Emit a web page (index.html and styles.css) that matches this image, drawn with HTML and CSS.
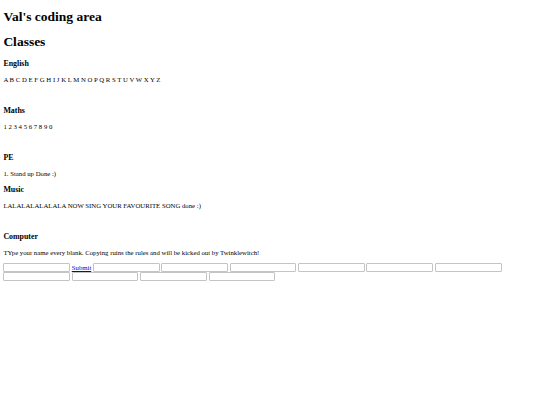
FILE: index.html
```html
<!DOCTYPE html>
<html>
<head>
<meta charset="utf-8">
<title>Val's coding area</title>
<link rel="stylesheet" href="styles.css">
</head>
<body class="page">
<h1 class="title title-first">Val's coding area</h1>
<h1 class="title">Classes</h1>
<h3 class="subject">English</h3>
<p class="lesson lesson-end">A B C D E F G H I J K L M N O P Q R S T U V W X Y Z</p>
<h3 class="subject">Maths</h3>
<p class="lesson lesson-end">1 2 3 4 5 6 7 8 9 0</p>
<h3 class="subject">PE</h3>
<p class="lesson">1. Stand up Done :)</p>
<h3 class="subject">Music</h3>
<p class="lesson lesson-end">LALALALALALALA NOW SING YOUR FAVOURITE SONG done :)</p>
<h3 class="subject">Computer</h3>
<p class="lesson">TYpe your name every blank. Copying ruins the rules and will be kicked out by Twinklewitch!</p>
<div class="blanks">
<input class="blank" type="text"> <a class="submit" href="#">Submit</a> <input class="blank" type="text"> <input class="blank" type="text"> <input class="blank" type="text"> <input class="blank" type="text"> <input class="blank" type="text"> <input class="blank" type="text"> <input class="blank" type="text"> <input class="blank" type="text"> <input class="blank" type="text"> <input class="blank" type="text">
</div>
</body>
</html>
```
FILE: styles.css
```css
html {
  background: #ffffff;
}
.page {
  margin: 3.375px;
  font-family: "Liberation Serif", "Times New Roman", serif;
  font-size: 6.75px;
  color: #000000;
}
.title {
  font-size: 13.5px;
  font-weight: bold;
  margin: 0.67em 0;
}
.title-first {
  margin-top: 6px;
}
.subject {
  font-size: 7.9px;
  font-weight: bold;
  margin: 1em 0;
}
.lesson {
  margin: 1em 0;
}
.lesson-end {
  margin-bottom: 23px;
}
.blanks {
  margin-top: 1px;
  line-height: 9px;
}
.blank {
  box-sizing: border-box;
  width: 66.7px;
  height: 9px;
  margin: 0;
  padding: 0 1px;
  border: 1px solid #c4c4c4;
  border-radius: 1px;
  background: #ffffff;
  vertical-align: top;
  font-size: 5.6px;
}
.submit {
  color: #0000ee;
  text-decoration: underline;
  vertical-align: top;
}
```
